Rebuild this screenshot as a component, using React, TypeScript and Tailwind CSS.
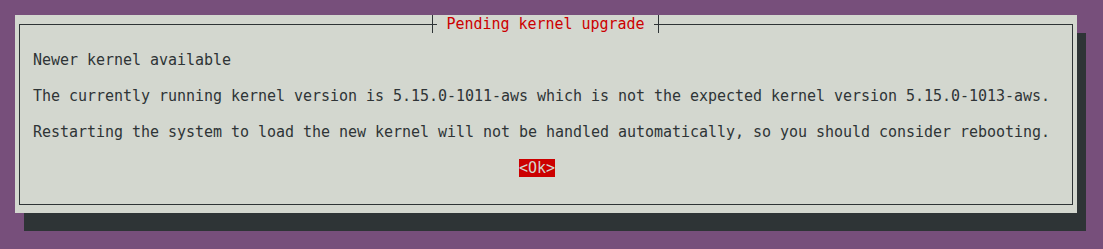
export default function App() {
  const mono = "font-['DejaVu_Sans_Mono','Liberation_Mono',monospace] text-[15px] leading-[18px] tracking-[-0.03px]";

  return (
    <div className={`w-[1103px] h-[249px] bg-[#774f7b] pt-[15px] pl-[15px] ${mono}`}>
      {/* dialog + shadow, one terminal cell = 9x18 */}
      <div className="w-[1062px] h-[198px] bg-[#d3d7cf] shadow-[9px_18px_0_#2e3436] pt-[9px] pl-[4px] pr-[4px] pb-[8px]">
        <div className="relative h-full border border-[#2e3436]">
          {/* title sitting on the top border */}
          <div className="absolute -top-[10px] left-0 right-0 flex justify-center">
            <div className="flex h-[18px] pr-[1px]">
              <span className="w-[9px] h-[18px] flex justify-center">
                <span className="w-px h-full bg-[#2e3436]" />
              </span>
              <span className="bg-[#d3d7cf] px-[9px] text-[#cc0000]">Pending kernel upgrade</span>
              <span className="w-[9px] h-[18px] flex justify-center">
                <span className="w-px h-full bg-[#2e3436]" />
              </span>
            </div>
          </div>

          <div className="pt-[26px] pl-[13px] flex flex-col gap-[18px] text-[#2e3436] whitespace-pre">
            <p>Newer kernel available</p>
            <p>The currently running kernel version is 5.15.0-1011-aws which is not the expected kernel version 5.15.0-1013-aws.</p>
            <p>Restarting the system to load the new kernel will not be handled automatically, so you should consider rebooting.</p>
            <div className="ml-[486px] w-[36px] h-[18px] bg-[#cc0000] text-[#d3d7cf] text-center">&lt;Ok&gt;</div>
          </div>
        </div>
      </div>
    </div>
  );
}
